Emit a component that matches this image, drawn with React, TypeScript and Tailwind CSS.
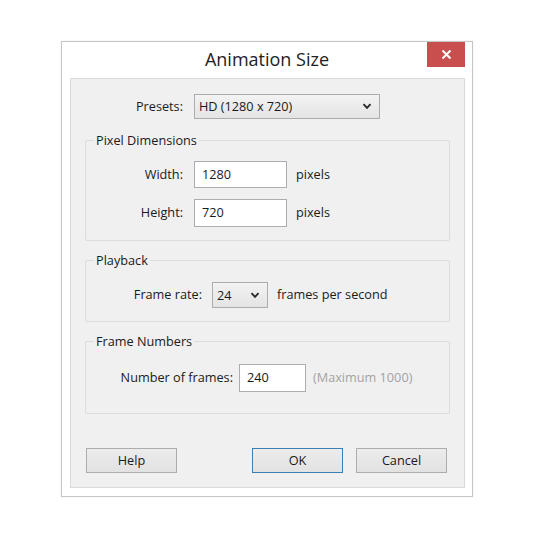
import React from "react";

const font = { fontFamily: '"Open Sans", "Noto Sans", "Liberation Sans", sans-serif' };

function Chevron() {
  return (
    <svg width="10" height="7" viewBox="0 0 10 7" className="shrink-0">
      <polyline points="1.5,1.2 5,4.8 8.5,1.2" fill="none" stroke="#2b2b2b" strokeWidth="1.9" />
    </svg>
  );
}

function Group({ title, children, className }: { title: string; children: React.ReactNode; className: string }) {
  return (
    <fieldset className={"ml-[14px] w-[365px] border border-[#dcdcdc] rounded-[2px] " + className}>
      <legend className="ml-[8px] px-[2px] h-[17px] leading-[17px] text-[12.7px] text-[#1a1a1a]">{title}</legend>
      {children}
    </fieldset>
  );
}

export default function App() {
  return (
    <div className="w-[535px] h-[539px] bg-white pt-[41px] pl-[61px]" style={font}>
      <div className="relative w-[412px] h-[456px] border border-[#c6c6c6] bg-white flex flex-col shadow-[0_0_2px_rgba(0,0,0,0.08)]">
        <div className="h-[36px] flex items-center justify-center text-[18px] text-[#222] pb-[1px]">
          Animation Size
        </div>
        <div className="absolute top-0 right-[7px] w-[38px] h-[25px] bg-[#c94f4f] flex items-center justify-center">
          <svg width="11" height="11" viewBox="0 0 11 11">
            <path d="M1.5 1.5 L9.5 9.5 M9.5 1.5 L1.5 9.5" stroke="#fff" strokeWidth="2" />
          </svg>
        </div>
        <div className="ml-[8px] w-[395px] h-[410px] border border-[#dadada] bg-[#f0f0f0] flex flex-col text-[12.7px] text-[#1a1a1a]">
          {/* Presets */}
          <div className="mt-[15px] flex items-center">
            <div className="w-[112px] text-right">Presets:</div>
            <div className="ml-[11px] w-[186px] h-[25px] border border-[#acacac] bg-[linear-gradient(#f3f3f3,#e4e4e4)] flex items-center justify-between pl-[4px] pr-[7px]">
              <span>HD (1280 x 720)</span>
              <Chevron />
            </div>
          </div>

          <Group title="Pixel Dimensions" className="mt-[13px] pb-[13px]">
            <div className="mt-[12px] flex items-center">
              <div className="w-[97px] text-right">Width:</div>
              <div className="ml-[11px] w-[93px] h-[27px] border border-[#abadb3] bg-white flex items-center pl-[7px]">1280</div>
              <div className="ml-[9px]">pixels</div>
            </div>
            <div className="mt-[11px] flex items-center">
              <div className="w-[97px] text-right">Height:</div>
              <div className="ml-[11px] w-[93px] h-[28px] border border-[#abadb3] bg-white flex items-center pl-[7px]">720</div>
              <div className="ml-[9px]">pixels</div>
            </div>
          </Group>

          <Group title="Playback" className="mt-[11px] pb-[13px]">
            <div className="mt-[13px] flex items-center">
              <div className="w-[116px] text-right">Frame rate:</div>
              <div className="ml-[10px] w-[56px] h-[26px] border border-[#acacac] bg-[linear-gradient(#f3f3f3,#e4e4e4)] flex items-center justify-between pl-[4px] pr-[7px]">
                <span className="pt-[2px]">24</span>
                <Chevron />
              </div>
              <div className="ml-[9px]">frames per second</div>
            </div>
          </Group>

          <Group title="Frame Numbers" className="mt-[11px] pb-[21px]">
            <div className="mt-[14px] flex items-center">
              <div className="w-[147px] text-right">Number of frames:</div>
              <div className="ml-[6px] w-[67px] h-[28px] border border-[#abadb3] bg-white flex items-center pl-[7px]">240</div>
              <div className="ml-[7px] text-[#a3a3a3]">(Maximum 1000)</div>
            </div>
          </Group>

          <div className="mt-[34px] ml-[15px] flex">
            <div className="w-[91px] h-[25px] border border-[#adadad] bg-[linear-gradient(#ececec,#e2e2e2)] flex items-center justify-center">Help</div>
            <div className="ml-[75px] w-[91px] h-[25px] border border-[#3c7fb1] bg-[linear-gradient(#ececec,#e2e2e2)] flex items-center justify-center">OK</div>
            <div className="ml-[13px] w-[91px] h-[25px] border border-[#adadad] bg-[linear-gradient(#ececec,#e2e2e2)] flex items-center justify-center">Cancel</div>
          </div>
        </div>
      </div>
    </div>
  );
}
